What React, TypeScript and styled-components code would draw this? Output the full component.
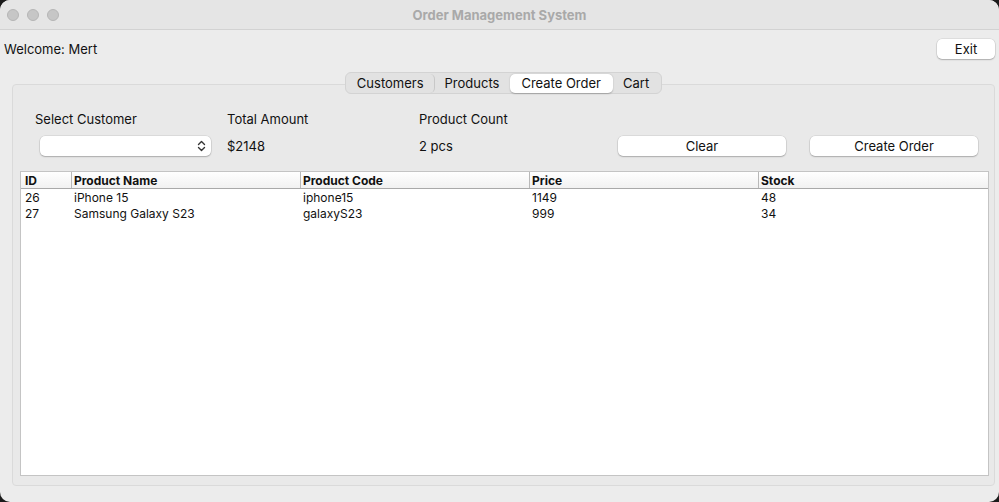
import React from "react";
import styled, { createGlobalStyle } from "styled-components";

const Global = createGlobalStyle`
  html, body { margin: 0; padding: 0; background: #1b1b1b; }
  body { font-family: Inter, "Liberation Sans", sans-serif; -webkit-font-smoothing: antialiased; }
  * { box-sizing: border-box; }
`;

const Window = styled.div`
  width: 999px;
  height: 502px;
  background: #ececec;
  border-radius: 10px;
  overflow: hidden;
  display: flex;
  flex-direction: column;
  color: #111;
  font-size: 13px;
`;

const TitleBar = styled.div`
  height: 30px;
  flex: 0 0 30px;
  background: #e5e5e5;
  border-bottom: 1px solid #d2d2d2;
  display: flex;
  align-items: center;
  position: relative;
  padding-left: 7px;
  gap: 8px;
`;

const Light = styled.span`
  width: 12px;
  height: 12px;
  border-radius: 50%;
  background: #c6c6c6;
  border: 1px solid #b5b5b5;
`;

const Title = styled.div`
  position: absolute;
  left: 0;
  right: 0;
  top: 0;
  bottom: 0;
  display: flex;
  align-items: center;
  justify-content: center;
  font-weight: 700;
  font-size: 13px;
  color: #a9a9a9;
  pointer-events: none;
`;

const TopRow = styled.div`
  display: flex;
  justify-content: space-between;
  align-items: center;
  padding: 8px 4px 0 4px;
  height: 29px;
`;

const Welcome = styled.span`
  font-size: 13px;
`;

const Button = styled.button<{ $w: number }>`
  width: ${(p) => p.$w}px;
  height: 20px;
  background: #ffffff;
  border: none;
  border-radius: 5px;
  box-shadow: 0 0 0 0.5px rgba(0, 0, 0, 0.12), 0 1px 1.5px rgba(0, 0, 0, 0.22);
  font-family: inherit;
  font-size: 13px;
  color: #111;
  padding: 0;
`;

const TabArea = styled.div`
  flex: 1;
  display: flex;
  flex-direction: column;
  margin: 13px 4px 16px 12px;
`;

const TabBarRow = styled.div`
  display: flex;
  justify-content: center;
  margin-bottom: -10px;
  position: relative;
  z-index: 1;
`;

const Segmented = styled.div`
  display: flex;
  align-items: center;
  height: 22px;
  padding: 1px;
  background: #e2e2e2;
  border: 1px solid #d3d3d3;
  border-radius: 6px;
`;

const Tab = styled.div<{ $active?: boolean; $sep?: boolean }>`
  height: 19px;
  display: flex;
  align-items: center;
  padding: 0 ${(p) => (p.$active ? 11 : 10)}px;
  border-radius: 5px;
  background: ${(p) => (p.$active ? "#ffffff" : "transparent")};
  box-shadow: ${(p) => (p.$active ? "0 0.5px 1.5px rgba(0,0,0,0.25)" : "none")};
  border-right: 1px solid ${(p) => (p.$sep ? "#c8c8c8" : "transparent")};
  font-size: 13px;
  color: #111;
`;

const Panel = styled.div`
  flex: 1;
  background: #e9e9e9;
  border: 1px solid #dadada;
  border-radius: 4px;
  display: flex;
  flex-direction: column;
  padding: 26px 5px 9px 7px;
`;

const FormGrid = styled.div`
  display: grid;
  grid-template-columns: repeat(5, 192px);
  grid-template-rows: 16px 22px;
  row-gap: 8px;
  padding-left: 15px;
  margin-bottom: 14px;
`;

const Label = styled.div`
  font-size: 13px;
  display: flex;
  align-items: center;
`;

const Cell = styled.div`
  display: flex;
  align-items: center;
`;

const ButtonCell = styled.div`
  display: flex;
  align-items: center;
  padding-left: 7px;
`;

const Combo = styled.div`
  margin-left: 5px;
  width: 171px;
  height: 20px;
  background: #fff;
  border-radius: 5px;
  box-shadow: 0 0 0 0.5px rgba(0, 0, 0, 0.12), 0 1px 1.5px rgba(0, 0, 0, 0.22);
  display: flex;
  align-items: center;
  justify-content: flex-end;
  padding-right: 5px;
`;

const Table = styled.div`
  flex: 1;
  background: #fff;
  border: 1px solid #c4c4c4;
  display: flex;
  flex-direction: column;
`;

const Row = styled.div<{ $header?: boolean }>`
  display: grid;
  grid-template-columns: 50px 229px 229px 229px 1fr;
  height: ${(p) => (p.$header ? "17px" : "16px")};
  background: ${(p) => (p.$header ? "linear-gradient(#ffffff, #f1f1f1)" : "#fff")};
  border-bottom: ${(p) => (p.$header ? "1px solid #a9a9a9" : "none")};
  font-size: 12px;
  font-weight: ${(p) => (p.$header ? 700 : 400)};
`;

const Col = styled.div<{ $header?: boolean; $first?: boolean }>`
  display: flex;
  align-items: center;
  padding-left: ${(p) => (p.$first ? 3 : 2)}px;
  border-left: ${(p) => (p.$header && !p.$first ? "1px solid #b8b8b8" : "1px solid transparent")};
  white-space: nowrap;
  overflow: hidden;
`;

const Chevrons = () => (
  <svg width="9" height="12" viewBox="0 0 9 12" fill="none" stroke="#333" strokeWidth="1.4" strokeLinecap="round" strokeLinejoin="round">
    <path d="M1.5 4.5 L4.5 1.5 L7.5 4.5" />
    <path d="M1.5 7.5 L4.5 10.5 L7.5 7.5" />
  </svg>
);

const columns = ["ID", "Product Name", "Product Code", "Price", "Stock"];
const rows = [
  ["26", "iPhone 15", "iphone15", "1149", "48"],
  ["27", "Samsung Galaxy S23", "galaxyS23", "999", "34"],
];

export default function App() {
  return (
    <>
      <Global />
      <Window>
        <TitleBar>
          <Light />
          <Light />
          <Light />
          <Title>Order Management System</Title>
        </TitleBar>
        <TopRow>
          <Welcome>Welcome: Mert</Welcome>
          <Button $w={58}>Exit</Button>
        </TopRow>
        <TabArea>
          <TabBarRow>
            <Segmented>
              <Tab $sep>Customers</Tab>
              <Tab>Products</Tab>
              <Tab $active>Create Order</Tab>
              <Tab>Cart</Tab>
            </Segmented>
          </TabBarRow>
          <Panel>
            <FormGrid>
              <Label>Select Customer</Label>
              <Label>Total Amount</Label>
              <Label>Product Count</Label>
              <div />
              <div />
              <Cell>
                <Combo>
                  <Chevrons />
                </Combo>
              </Cell>
              <Cell>$2148</Cell>
              <Cell>2 pcs</Cell>
              <ButtonCell>
                <Button $w={168}>Clear</Button>
              </ButtonCell>
              <ButtonCell>
                <Button $w={168}>Create Order</Button>
              </ButtonCell>
            </FormGrid>
            <Table>
              <Row $header>
                {columns.map((c, i) => (
                  <Col key={c} $header $first={i === 0}>
                    {c}
                  </Col>
                ))}
              </Row>
              {rows.map((r) => (
                <Row key={r[0]}>
                  {r.map((v, i) => (
                    <Col key={i} $first={i === 0}>
                      {v}
                    </Col>
                  ))}
                </Row>
              ))}
            </Table>
          </Panel>
        </TabArea>
      </Window>
    </>
  );
}
